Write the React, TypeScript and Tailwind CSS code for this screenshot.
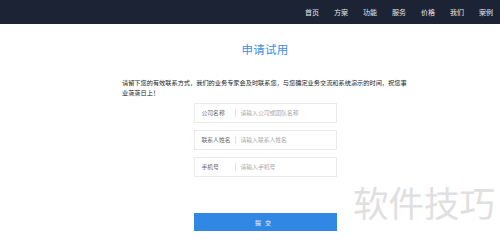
const NAV = ['首页', '方案', '功能', '服务', '价格', '我们', '案例'];

const FIELDS = [
  ['公司名称', '请输入公司或团队名称'],
  ['联系人姓名', '请输入联系人姓名'],
  ['手机号', '请输入手机号'],
];

export default function App() {
  return (
    <div
      className="relative w-[500px] h-[246px] overflow-hidden bg-white text-[#333]"
      style={{ fontFamily: '"Noto Sans CJK SC", "Noto Sans", sans-serif' }}
    >
      <header className="h-[24px] bg-[#1b2335] flex items-center justify-end pr-[7px] gap-[15px]">
        {NAV.map((n) => (
          <span key={n} className="text-[7px] leading-none text-[#e6e8ee]">
            {n}
          </span>
        ))}
      </header>

      <main className="ml-[122px] w-[286px] flex flex-col items-center">
        <h1 className="mt-[18px] text-[11.5px] leading-[14px] text-[#3a8ee6] tracking-[0.2px]">申请试用</h1>

        <p className="mt-[22px] w-full text-[6.2px] leading-[9.5px] text-[#222]">
          请留下您的有效联系方式，我们的业务专家会及时联系您，与您确定业务交流和系统演示的时间，祝您事业蒸蒸日上！
        </p>

        <div className="mt-[6px] w-[143px] flex flex-col gap-[7px]">
          {FIELDS.map(([label, ph]) => (
            <div
              key={label}
              className="h-[20px] border border-[#e9ecef] flex items-center pl-[7px] text-[5.8px]"
            >
              <span className="w-[33px] text-[#666]">{label}</span>
              <span className="w-px h-[8px] bg-[#e3e3e3] mr-[5px]" />
              <span className="text-[#a8a8a8]">{ph}</span>
            </div>
          ))}
        </div>

        <button
          type="button"
          className="mt-[36px] w-[143px] h-[18px] bg-[#3088e4] text-white text-[6px] tracking-[4px] flex items-center justify-center"
        >
          提交
        </button>
      </main>

      <div className="absolute left-[353px] top-[184px] text-[35.5px] leading-none text-[#e0e0e0] whitespace-nowrap">
        软件技巧
      </div>
    </div>
  );
}
